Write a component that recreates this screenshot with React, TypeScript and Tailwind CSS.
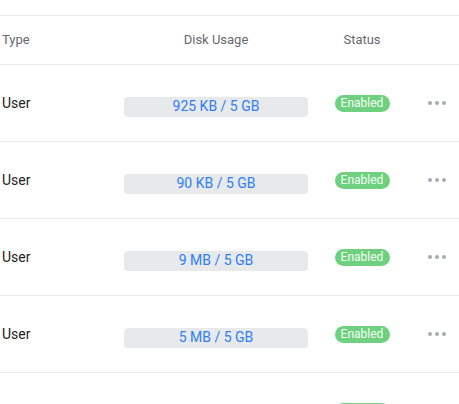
import React from 'react';

const rows = ['925 KB / 5 GB', '90 KB / 5 GB', '9 MB / 5 GB', '5 MB / 5 GB'];

const MoreDots: React.FC = () => (
  <div className="flex items-center gap-[3px]">
    <span className="w-[4px] h-[4px] rounded-full bg-[#a7abb3]" />
    <span className="w-[4px] h-[4px] rounded-full bg-[#a7abb3]" />
    <span className="w-[4px] h-[4px] rounded-full bg-[#a7abb3]" />
  </div>
);

const App: React.FC = () => {
  return (
    <div className="w-[459px] h-[404px] overflow-hidden bg-white font-['Roboto',sans-serif]">
      <div className="h-[15px]" />

      {/* header */}
      <div className="grid grid-cols-[110px_212px_80px_57px] h-[50px] items-center border-y border-[#e9e9e9] text-[13px] text-[#666a70]">
        <div className="pl-[2px]">Type</div>
        <div className="text-center">Disk Usage</div>
        <div className="text-center">Status</div>
        <div />
      </div>

      {rows.map((usage, i) => (
        <div
          key={i}
          className="grid grid-cols-[110px_212px_80px_57px] h-[77px] items-center border-b border-[#e9e9e9]"
        >
          <div className="pl-[2px] text-[14px] text-[#222]">User</div>
          <div className="flex justify-center">
            <div className="mt-[7px] w-[184px] h-[20px] rounded-[4px] bg-[#e8e9eb] flex items-center justify-center text-[14px] text-[#2f7ef7]">
              {usage}
            </div>
          </div>
          <div className="flex justify-center">
            <span className="w-[55px] h-[17px] rounded-full bg-[#6fd07f] flex items-center justify-center text-[12px] text-[#f4fff4]">
              Enabled
            </span>
          </div>
          <div className="flex justify-end pr-[13px]">
            <MoreDots />
          </div>
        </div>
      ))}

      {/* next row, only the top of its status pill shows */}
      <div className="grid grid-cols-[110px_212px_80px_57px] h-[77px] items-center">
        <div />
        <div />
        <div className="flex justify-center">
          <span className="w-[55px] h-[17px] rounded-full bg-[#6fd07f]" />
        </div>
        <div />
      </div>
    </div>
  );
};

export default App;
